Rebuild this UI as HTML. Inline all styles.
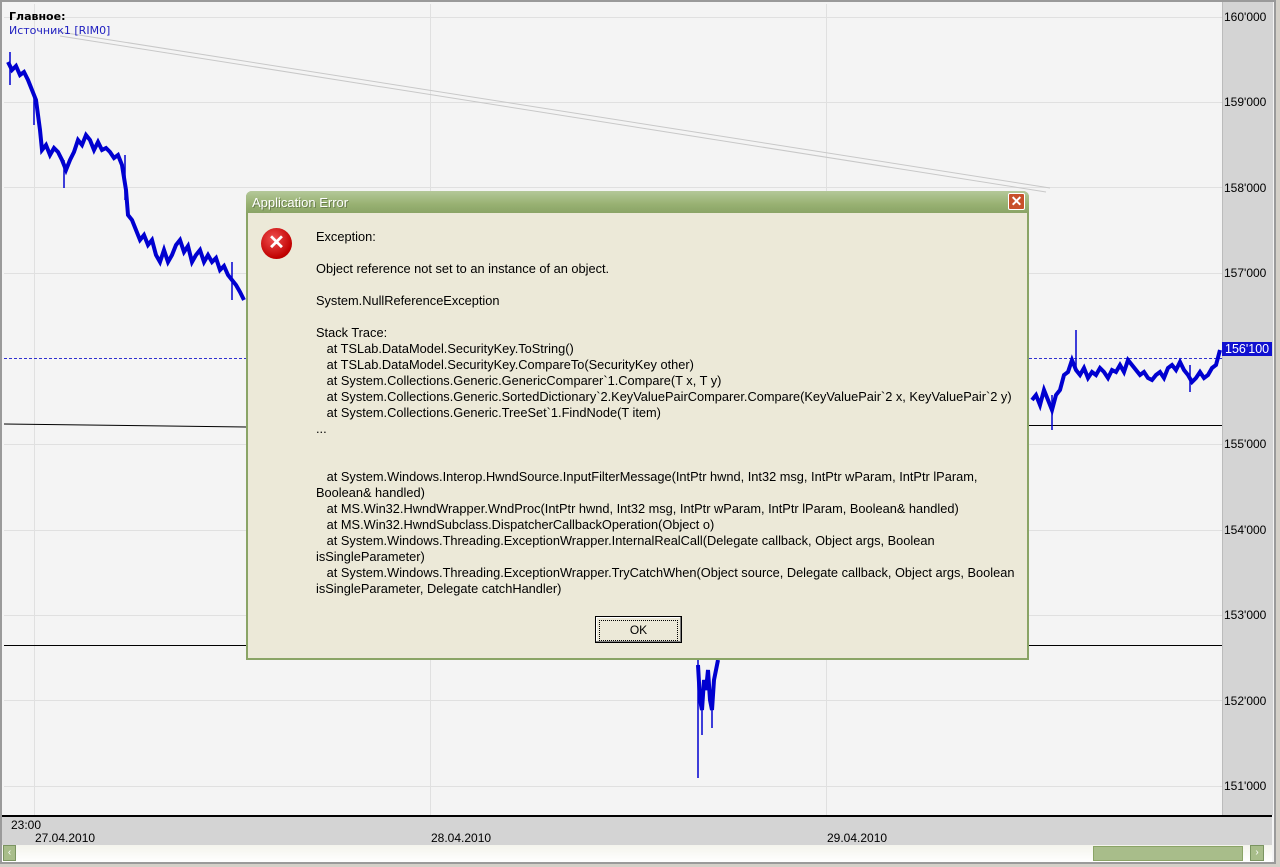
<!DOCTYPE html>
<html><head><meta charset="utf-8"><style>
body{margin:0;width:1280px;height:867px;overflow:hidden;background:#d4d0c8;font-family:Tahoma,"Liberation Sans","DejaVu Sans",sans-serif;}
.abs{position:absolute}
#frame{left:0;top:0;width:1276px;height:864px;background:#f4f4f4;border:2px solid #9a9a9a;box-sizing:border-box}
.lab{font-size:12px;color:#000;font-family:"Liberation Sans",sans-serif}
#dlg{left:246px;top:191px;width:783px;height:469px;background:#ece9d8;border:2px solid #8aa466;border-top:none;box-sizing:border-box;border-radius:6px 6px 0 0}
#tb{left:-2px;top:0;width:783px;height:22px;background:linear-gradient(#b4c899,#98b172 60%,#8aa466);border-radius:6px 6px 0 0;color:#fff;font-family:"Liberation Sans",sans-serif;font-size:13px;line-height:24px;padding-left:6px;box-sizing:border-box;text-shadow:1px 1px 0 #6a7d4e}
#txt{left:68px;top:38px;font-family:"Liberation Sans",sans-serif;font-size:12.8px;line-height:16px;color:#000;white-space:pre}
</style></head><body>
<div id="frame" class="abs"></div>
<div class="abs" style="left:1222px;top:2px;width:50px;height:813px;background:#d4d4d4;border-left:1px solid #bbb"></div>
<div class="abs" style="left:2px;top:815px;width:1270px;height:30px;background:#d4d4d4;border-top:2px solid #000"></div>
<svg class="abs" style="left:0;top:0" width="1280" height="867">
<g stroke="#e0e0e0" stroke-width="1">
<line x1="4" y1="17.5" x2="1222" y2="17.5"/><line x1="4" y1="102.5" x2="1222" y2="102.5"/><line x1="4" y1="187.5" x2="1222" y2="187.5"/><line x1="4" y1="273.5" x2="1222" y2="273.5"/><line x1="4" y1="444.5" x2="1222" y2="444.5"/><line x1="4" y1="530.5" x2="1222" y2="530.5"/><line x1="4" y1="615.5" x2="1222" y2="615.5"/><line x1="4" y1="700.5" x2="1222" y2="700.5"/><line x1="4" y1="786.5" x2="1222" y2="786.5"/>
<line x1="34.5" y1="4" x2="34.5" y2="815"/><line x1="430.5" y1="4" x2="430.5" y2="815"/><line x1="826.5" y1="4" x2="826.5" y2="815"/>
</g>
<line x1="60" y1="32" x2="1050" y2="188" stroke="#c8c8c8"/><line x1="60" y1="36" x2="1046" y2="192" stroke="#c8c8c8"/>
<line x1="4" y1="358.5" x2="1222" y2="358.5" stroke="#3030d0" stroke-dasharray="3,2"/>
<line x1="4" y1="424" x2="246" y2="427" stroke="#000"/><line x1="1029" y1="425.5" x2="1222" y2="425.5" stroke="#000"/>
<line x1="4" y1="645.5" x2="1222" y2="645.5" stroke="#000"/>
<g stroke="#0000d0" stroke-width="4" fill="none">
<polyline points="8,62 12,70 16,66 20,75 24,72 28,80 32,90 36,100 38,115 40,130 42,150 46,145 50,155 54,148 58,152 62,160 66,170 70,160 74,152 78,140 82,145 86,135 90,140 94,150 98,142 102,150 106,148 110,152 114,158 118,155 122,165 126,190 128,215 132,220 136,230 140,240 144,235 148,245 152,240 156,255 160,262 164,250 168,262 172,255 176,245 180,240 184,252 188,246 192,262 196,255 200,250 204,262 208,255 212,262 216,258 220,270 224,266 228,275 232,280 236,285 240,292 244,300"/>
<polyline points="1032,400 1036,395 1040,405 1044,390 1048,400 1052,410 1056,395 1060,390 1064,375 1068,372 1072,360 1076,370 1080,375 1084,368 1088,378 1092,372 1096,375 1100,368 1104,372 1108,378 1112,370 1116,372 1120,365 1124,372 1128,360 1132,365 1136,370 1140,375 1144,372 1148,378 1152,380 1156,375 1160,372 1164,378 1168,368 1172,365 1176,370 1180,362 1184,370 1188,375 1192,382 1196,378 1200,372 1204,378 1208,375 1212,368 1216,365 1220,350"/>
<polyline points="698,665 700,700 702,710 704,680 706,690 708,670 710,700 712,710 714,680 716,670 718,660"/>
</g>
<g stroke="#0000d0" stroke-width="1.5">
<line x1="10" y1="52" x2="10" y2="85"/><line x1="34" y1="95" x2="34" y2="125"/><line x1="64" y1="160" x2="64" y2="188"/><line x1="125" y1="155" x2="125" y2="200"/><line x1="232" y1="262" x2="232" y2="300"/>
<line x1="1076" y1="330" x2="1076" y2="370"/><line x1="1052" y1="395" x2="1052" y2="430"/><line x1="1190" y1="365" x2="1190" y2="392"/>
<line x1="698" y1="660" x2="698" y2="778"/><line x1="702" y1="690" x2="702" y2="735"/><line x1="712" y1="690" x2="712" y2="728"/>
</g>
</svg>
<div class="abs lab" style="left:9px;top:10px;font-weight:bold;font-family:'DejaVu Sans',sans-serif;font-size:11px">Главное:</div>
<div class="abs lab" style="left:9px;top:24px;color:#2020c0;font-family:'DejaVu Sans',sans-serif;font-size:11px">Источник1 [RIM0]</div>
<div class="abs lab" style="left:1224px;top:10px">160'000</div>
<div class="abs lab" style="left:1224px;top:95px">159'000</div>
<div class="abs lab" style="left:1224px;top:181px">158'000</div>
<div class="abs lab" style="left:1224px;top:266px">157'000</div>
<div class="abs lab" style="left:1222px;top:342px;background:#1010d0;color:#fff;padding:0 3px;font-size:12.5px">156'100</div>
<div class="abs lab" style="left:1224px;top:437px">155'000</div>
<div class="abs lab" style="left:1224px;top:523px">154'000</div>
<div class="abs lab" style="left:1224px;top:608px">153'000</div>
<div class="abs lab" style="left:1224px;top:694px">152'000</div>
<div class="abs lab" style="left:1224px;top:779px">151'000</div>
<div class="abs lab" style="left:11px;top:818px">23:00</div>
<div class="abs lab" style="left:35px;top:831px">27.04.2010</div>
<div class="abs lab" style="left:431px;top:831px">28.04.2010</div>
<div class="abs lab" style="left:827px;top:831px">29.04.2010</div>
<div class="abs" style="left:2px;top:845px;width:1270px;height:17px;background:linear-gradient(#f4f4ec,#fff)"></div>
<div class="abs" style="left:3px;top:845px;width:13px;height:16px;background:#a8bd8a;border:1px solid #7a9460;box-sizing:border-box;color:#fff;font-size:10px;text-align:center;line-height:14px">‹</div>
<div class="abs" style="left:1093px;top:846px;width:150px;height:15px;background:#a8bd8a;border:1px solid #8aa466;box-sizing:border-box"></div>
<div class="abs" style="left:1250px;top:845px;width:14px;height:16px;background:#a8bd8a;border:1px solid #7a9460;box-sizing:border-box;color:#fff;font-size:10px;text-align:center;line-height:14px">›</div>
<div id="dlg" class="abs">
<div id="tb" class="abs">Application Error</div>
<div class="abs" style="left:760px;top:2px;width:17px;height:17px;background:#c8502a;border:1px solid #fff;border-radius:2px;box-sizing:border-box;color:#fff;font:bold 14px/15px 'Liberation Sans',sans-serif;text-align:center">✕</div>
<div class="abs" style="left:13px;top:37px;width:31px;height:31px;border-radius:50%;background:radial-gradient(circle at 40% 35%,#f05050,#c00000 70%,#900);color:#fff;font:bold 20px/31px 'Liberation Sans',sans-serif;text-align:center">✕</div>
<div id="txt" class="abs">Exception:

Object reference not set to an instance of an object.

System.NullReferenceException

Stack Trace:
   at TSLab.DataModel.SecurityKey.ToString()
   at TSLab.DataModel.SecurityKey.CompareTo(SecurityKey other)
   at System.Collections.Generic.GenericComparer`1.Compare(T x, T y)
   at System.Collections.Generic.SortedDictionary`2.KeyValuePairComparer.Compare(KeyValuePair`2 x, KeyValuePair`2 y)
   at System.Collections.Generic.TreeSet`1.FindNode(T item)
...


   at System.Windows.Interop.HwndSource.InputFilterMessage(IntPtr hwnd, Int32 msg, IntPtr wParam, IntPtr lParam,
Boolean&amp; handled)
   at MS.Win32.HwndWrapper.WndProc(IntPtr hwnd, Int32 msg, IntPtr wParam, IntPtr lParam, Boolean&amp; handled)
   at MS.Win32.HwndSubclass.DispatcherCallbackOperation(Object o)
   at System.Windows.Threading.ExceptionWrapper.InternalRealCall(Delegate callback, Object args, Boolean
isSingleParameter)
   at System.Windows.Threading.ExceptionWrapper.TryCatchWhen(Object source, Delegate callback, Object args, Boolean
isSingleParameter, Delegate catchHandler)</div>
<div class="abs" style="left:347px;top:425px;width:87px;height:27px;border:1px solid #000;background:#ece9d8;box-shadow:inset -1px -1px 0 #808080,inset 1px 1px 0 #fff;box-sizing:border-box">
<div style="margin:3px;height:19px;border:1px dotted #000;font:12px/19px 'Liberation Sans',sans-serif;text-align:center">OK</div></div>
</div>
</body></html>
